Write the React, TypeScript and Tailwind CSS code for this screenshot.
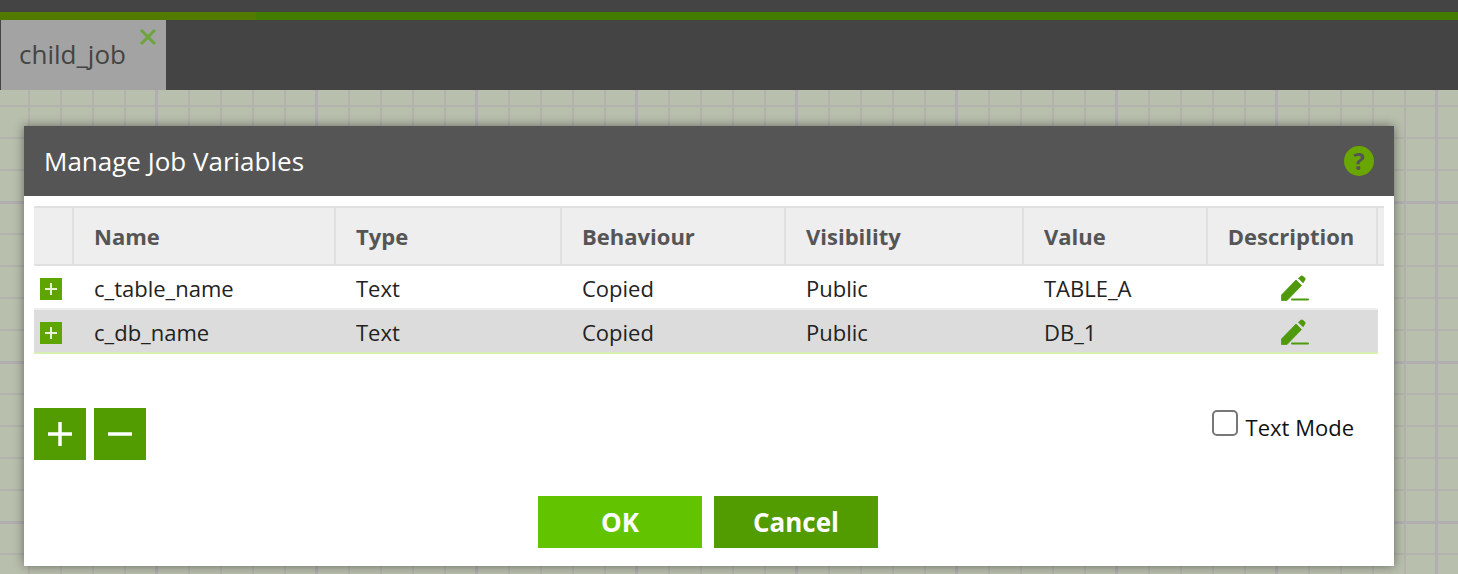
const COLUMNS = ['Name', 'Type', 'Behaviour', 'Visibility', 'Value', 'Description']
const GRID = 'grid grid-cols-[40px_262px_226px_224px_238px_184px_170px]'

const ROWS = [
  { name: 'c_table_name', type: 'Text', behaviour: 'Copied', visibility: 'Public', value: 'TABLE_A' },
  { name: 'c_db_name', type: 'Text', behaviour: 'Copied', visibility: 'Public', value: 'DB_1' },
]

function PencilIcon() {
  return (
    <svg width="28" height="26" viewBox="0 0 28 26" className="text-[#4f9a0c]">
      <path d="M0.5 25.5 L0.5 20 L15 5 L20.5 10.5 L6 25.5 Z" fill="currentColor" stroke="currentColor" strokeWidth="0.8" strokeLinejoin="round" />
      <path d="M17 3.2 L20 0.8 Q21 0.2 22 1 L24.2 3 Q25 4 24.2 5 L22.2 8.2 Z" fill="currentColor" />
      <rect x="10" y="23.4" width="18" height="2.2" rx="1" fill="currentColor" />
    </svg>
  )
}

export default function App() {
  return (
    <div className="h-[574px] overflow-hidden flex flex-col bg-[#444444] font-['Open_Sans',sans-serif]">
      <div className="h-3 shrink-0 bg-[#444444]" />
      <div className="h-2 shrink-0 flex bg-[#437d00]">
        <div className="w-[256px] bg-[#537a00]" />
      </div>

      {/* Tabs */}
      <div className="h-[70px] shrink-0 pl-px">
        <div className="relative w-[165px] h-full bg-[#a3a3a3] pl-[18px] pt-[16px] text-[26px] leading-[36px] text-[#444444]">
          child_job
          <svg width="18" height="18" viewBox="0 0 18 18" className="absolute right-[9px] top-[8px] text-[#6da43c]">
            <path d="M2 2 L16 16 M16 2 L2 16" stroke="currentColor" strokeWidth="3" />
          </svg>
        </div>
      </div>

      {/* Canvas */}
      <div className="flex-1 pl-6 pt-9 bg-[#b9bfad] bg-[linear-gradient(to_right,#b0aeb0_3px,transparent_3px),linear-gradient(to_bottom,#b0aeb0_3px,transparent_3px),linear-gradient(to_right,#b1b3ac_2px,transparent_2px),linear-gradient(to_bottom,#b1b3ac_2px,transparent_2px)] bg-size-[160px_160px,160px_160px,32px_32px,32px_32px] bg-position-[155px_0,0_111px,28px_0,0_15px]">
        <div className="w-[1370px] h-[440px] flex flex-col bg-white shadow-[0_0_10px_rgba(0,0,0,0.45)]">
          <div className="h-[70px] shrink-0 flex items-center justify-between pl-5 pr-5 bg-[#555555]">
            <span className="text-[26px] text-white">Manage Job Variables</span>
            <div className="w-[30px] h-[30px] rounded-full bg-[#6aa600] flex items-center justify-center text-[24px] font-bold text-[#555555]">?</div>
          </div>

          <div className="px-2.5 pt-2.5">
            {/* Table header */}
            <div className={`${GRID} h-[60px] bg-[#eeeeee] border-y-2 border-[#e0e0e0]`}>
              <div className="border-r-2 border-[#e0e0e0]" />
              {COLUMNS.map((col) => (
                <div
                  key={col}
                  className={`flex items-center border-r-2 border-[#e0e0e0] text-[22px] font-bold text-[#555555] ${col === 'Description' ? 'justify-center pr-[2px]' : 'pl-5'}`}
                >
                  {col}
                </div>
              ))}
            </div>

            {/* Rows */}
            {ROWS.map((row, i) => (
              <div
                key={row.name}
                className={`${GRID} w-[1344px] h-[44px] pt-[2px] text-[22px] text-[#222222] ${i === 1 ? 'bg-[#dcdcdc] border-b-2 border-[#d9f0b4]' : 'border-b-2 border-[#eeeeee]'}`}
              >
                <div className="flex items-center pl-1.5">
                  <div className="w-[22px] h-[22px] mt-[2px] bg-[#5fa500] flex items-center justify-center">
                    <svg width="14" height="14" viewBox="0 0 14 14" className="text-[#e8f4d8]">
                      <path d="M7 1 V13 M1 7 H13" stroke="currentColor" strokeWidth="2" />
                    </svg>
                  </div>
                </div>
                <div className="flex items-center pl-5">{row.name}</div>
                <div className="flex items-center pl-5">{row.type}</div>
                <div className="flex items-center pl-5">{row.behaviour}</div>
                <div className="flex items-center pl-5">{row.visibility}</div>
                <div className="flex items-center pl-5">{row.value}</div>
                <div className="flex items-center justify-center pl-[4px]"><PencilIcon /></div>
              </div>
            ))}
          </div>

          {/* Add / remove and text mode */}
          <div className="flex justify-between pl-2.5 pr-10 mt-[54px]">
            <div className="flex gap-2">
              <button className="w-[52px] h-[52px] bg-[#529b00] flex items-center justify-center">
                <svg width="24" height="24" viewBox="0 0 24 24" className="text-white">
                  <path d="M12 0 V24 M0 12 H24" stroke="currentColor" strokeWidth="3.5" />
                </svg>
              </button>
              <button className="w-[52px] h-[52px] bg-[#529b00] flex items-center justify-center">
                <svg width="24" height="24" viewBox="0 0 24 24" className="text-white">
                  <path d="M0 12 H24" stroke="currentColor" strokeWidth="3.5" />
                </svg>
              </button>
            </div>
            <label className="flex items-start gap-2 h-8 pt-0.5 text-[22px] text-[#111111]">
              <span className="w-[26px] h-[26px] border-2 border-[#777777] rounded-[5px] bg-white" />
              <span className="leading-[32px] mt-px">Text Mode</span>
            </label>
          </div>

          <div className="flex justify-center gap-3 mt-9 pr-[2px]">
            <button className="w-[164px] h-[52px] bg-[#62c400] text-[26px] font-bold text-white">OK</button>
            <button className="w-[164px] h-[52px] bg-[#529b00] text-[26px] font-bold text-white">Cancel</button>
          </div>
        </div>
      </div>
    </div>
  )
}
